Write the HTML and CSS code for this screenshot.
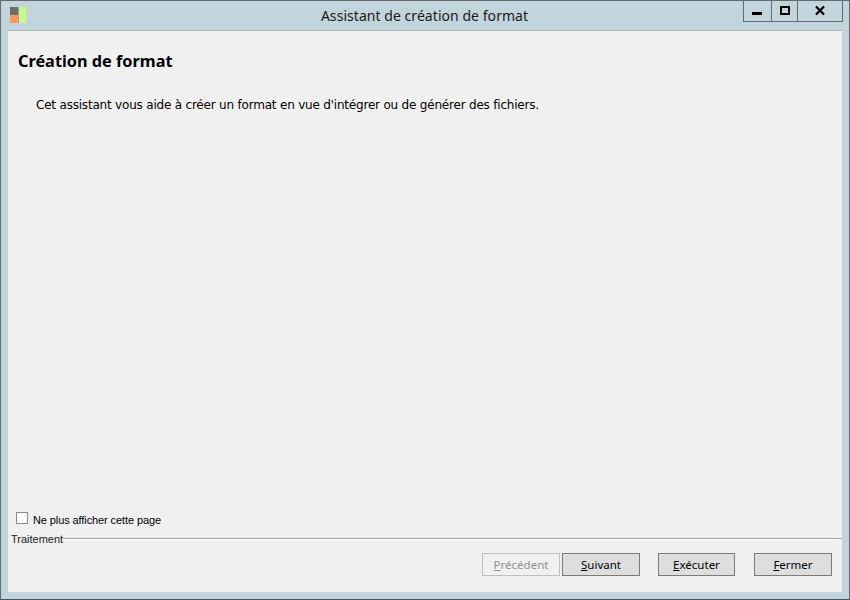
FILE: index.html
```html
<!DOCTYPE html>
<html lang="fr">
<head>
    <meta charset="UTF-8">
    <meta name="viewport" content="width=device-width, initial-scale=1.0">
    <title>Assistant de création de format</title>
    <link rel="stylesheet" href="styles.css">
</head>
<body>
    <div class="window">
        <header class="titlebar">
            <svg class="app-icon" width="18" height="17" viewBox="0 0 18 17">
                <rect x="0" y="0" width="8" height="8" fill="#6e6e6e"/>
                <rect x="0" y="8" width="8" height="8" fill="#f79a64"/>
                <rect x="8" y="0" width="1" height="16" fill="#9fa59a"/>
                <rect x="9" y="0" width="7" height="16" fill="#c8f88e"/>
                <rect x="16" y="0" width="1" height="16" fill="#c5e4b0"/>
            </svg>
            <div class="window-title">Assistant de création de format</div>
            <div class="window-controls">
                <button class="ctl ctl-min" aria-label="Réduire">
                    <svg width="12" height="12" viewBox="0 0 12 12"><rect x="0" y="7" width="10" height="3" fill="#000"/></svg>
                </button>
                <button class="ctl ctl-max" aria-label="Agrandir">
                    <svg width="12" height="12" viewBox="0 0 12 12"><rect x="2" y="2" width="8" height="7" fill="none" stroke="#000" stroke-width="2"/></svg>
                </button>
                <button class="ctl ctl-close" aria-label="Fermer">
                    <svg width="12" height="12" viewBox="0 0 12 12"><path d="M2 1.5 L10 9.5 M10 1.5 L2 9.5" fill="none" stroke="#000" stroke-width="2.2"/></svg>
                </button>
            </div>
        </header>

        <main class="content">
            <h1>Création de format</h1>
            <p class="intro">Cet assistant vous aide à créer un format en vue d'intégrer ou de générer des fichiers.</p>

            <label class="skip-page">
                <input type="checkbox">
                <span>Ne plus afficher cette page</span>
            </label>

            <div class="group-title">
                <span>Traitement</span>
            </div>

            <div class="actions">
                <div class="nav-buttons">
                    <button class="btn" disabled><u>P</u>récédent</button>
                    <button class="btn"><u>S</u>uivant</button>
                </div>
                <button class="btn btn-run"><u>E</u>xécuter</button>
                <button class="btn"><u>F</u>ermer</button>
            </div>
        </main>
    </div>
</body>
</html>
```

FILE: styles.css
```css
* {
    box-sizing: border-box;
    margin: 0;
    padding: 0;
}

body {
    width: 850px;
    height: 600px;
    overflow: hidden;
    font-family: "DejaVu Sans", Tahoma, sans-serif;
    color: #000;
}

.window {
    width: 850px;
    height: 600px;
    display: flex;
    flex-direction: column;
    background: #c2d5dc;
    border: 1px solid #5f6b70;
    border-bottom-color: #4a5559;
}

.titlebar {
    height: 29px;
    flex: none;
    display: grid;
    grid-template-columns: 1fr auto 1fr;
    align-items: start;
    padding: 0 10px 0 9px;
}

.app-icon {
    margin-top: 6px;
}

.window-title {
    font-family: "Noto Sans", Tahoma, sans-serif;
    font-size: 14px;
    line-height: 18px;
    letter-spacing: 0.05px;
    margin-top: 6px;
    color: #1a1a1a;
}

.window-controls {
    justify-self: end;
    display: flex;
    height: 21px;
    margin-right: -4px;
    border: 1px solid #5f6b70;
    border-top: 0;
}

.ctl {
    display: flex;
    align-items: center;
    justify-content: center;
    border: 0;
    background: transparent;
}

.ctl + .ctl {
    border-left: 1px solid #5f6b70;
}

.ctl-min { width: 27px; }
.ctl-max { width: 26px; }
.ctl-close { width: 45px; }

.content {
    flex: 1;
    margin: 0 7px 7px 7px;
    display: flex;
    flex-direction: column;
    background: #f0f0f0;
    border-top: 1px solid #a9b5ba;
    padding: 0 10px 16px 3px;
}

h1 {
    font-family: "Noto Sans", Tahoma, sans-serif;
    font-size: 16.3px;
    line-height: 20px;
    font-weight: bold;
    margin: 20px 0 0 7px;
}

.intro {
    font-size: 12px;
    line-height: 16px;
    letter-spacing: -0.2px;
    margin: 26px 0 0 25px;
}

.skip-page {
    display: flex;
    align-items: center;
    gap: 5px;
    margin-top: auto;
    margin-left: 5px;
    font-family: "Liberation Sans", Arial, sans-serif;
    font-size: 11px;
    letter-spacing: -0.1px;
    line-height: 16px;
}

.skip-page input {
    appearance: none;
    width: 12px;
    height: 12px;
    margin-bottom: 4px;
    background: #fff;
    border: 1px solid #8a8a8a;
}

.group-title {
    display: flex;
    align-items: center;
    margin: 4px -10px 0 0;
    font-family: "Liberation Sans", Arial, sans-serif;
    font-size: 11px;
    line-height: 14px;
    color: #222;
}

.group-title::after {
    content: "";
    flex: 1;
    height: 1px;
    margin-bottom: 2px;
    background: #a0a0a0;
    box-shadow: 0 1px #fff;
}

.actions {
    display: flex;
    justify-content: flex-end;
    gap: 19px;
    margin-top: 7px;
}

.nav-buttons {
    display: flex;
    gap: 2px;
    margin-right: -1px;
}

.btn {
    width: 78px;
    height: 23px;
    font-family: "Noto Sans", Tahoma, sans-serif;
    font-size: 11.5px;
    background: #dedede;
    border: 1px solid #7a7a7a;
    color: #000;
}

.btn-run {
    width: 77px;
}

.btn:disabled {
    background: #f0f0f0;
    border-color: #bfbfbf;
    color: #8f8f8f;
}
```
